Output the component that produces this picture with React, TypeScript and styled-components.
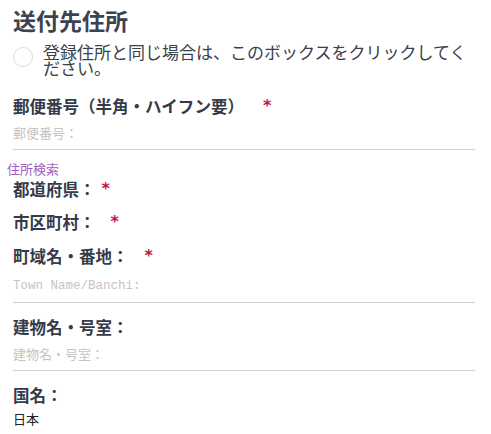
import React from 'react';
import styled, { createGlobalStyle } from 'styled-components';

const GlobalStyle = createGlobalStyle`
  body {
    margin: 0;
    background: #fff;
    font-family: 'Noto Sans CJK JP', 'Noto Sans', sans-serif;
    color: #3a3f4c;
  }
`;

const Form = styled.div`
  padding: 3px 16px 0 13px;
`;

const Title = styled.h2`
  margin: 0;
  font-size: 23px;
  line-height: 34px;
  font-weight: 700;
  color: #3d4250;
`;

const CheckRow = styled.label`
  display: flex;
  align-items: flex-start;
  gap: 10px;
  margin-top: 7px;
`;

const Circle = styled.span`
  flex: none;
  width: 18px;
  height: 18px;
  margin-top: 3px;
  border: 1px solid #dcdcdc;
  border-radius: 50%;
  background: #fff;
`;

const CheckText = styled.span`
  font-size: 17px;
  line-height: 16px;
  color: #3a3f4c;
`;

const Field = styled.div<{ $gap?: number }>`
  margin-top: ${p => p.$gap ?? 0}px;
`;

const Label = styled.div`
  display: flex;
  align-items: center;
  font-size: 16.5px;
  line-height: 20px;
  font-weight: 700;
  color: #353b48;
`;

const Required = styled.span<{ $space: number }>`
  margin-left: ${p => p.$space}px;
  color: #c8103c;
  font-size: 16px;
  font-weight: 700;
  font-family: 'DejaVu Sans', sans-serif;
`;

const Input = styled.div<{ $mono?: boolean }>`
  margin-top: ${p => (p.$mono ? 12 : 9)}px;
  padding-bottom: 8px;
  border-bottom: 1px solid #d2d2d2;
  font-size: ${p => (p.$mono ? '12.5px' : '13px')};
  line-height: 16px;
  color: #c4c4c4;
  font-family: ${p =>
    p.$mono
      ? "'Liberation Mono', 'Noto Sans CJK JP', monospace"
      : "'Noto Sans CJK JP', sans-serif"};
`;

const SearchLink = styled.a`
  display: block;
  margin: 11px 0 0 -6px;
  font-size: 13px;
  line-height: 16px;
  color: #a35fc0;
  text-decoration: none;
`;

const Value = styled.div`
  margin-top: 6px;
  font-size: 13px;
  line-height: 16px;
  color: #222;
`;

const App: React.FC = () => {
  return (
    <>
      <GlobalStyle />
      <Form>
        <Title>送付先住所</Title>
        <CheckRow>
          <Circle />
          <CheckText>登録住所と同じ場合は、このボックスをクリックしてください。</CheckText>
        </CheckRow>

        <Field $gap={20}>
          <Label>
            郵便番号（半角・ハイフン要）<Required $space={19}>*</Required>
          </Label>
          <Input>郵便番号：</Input>
        </Field>

        <SearchLink>住所検索</SearchLink>
        <Field $gap={2}>
          <Label>
            都道府県：<Required $space={6}>*</Required>
          </Label>
        </Field>
        <Field $gap={13}>
          <Label>
            市区町村：<Required $space={15}>*</Required>
          </Label>
        </Field>
        <Field $gap={14}>
          <Label>
            町域名・番地：<Required $space={16}>*</Required>
          </Label>
          <Input $mono>Town Name/Banchi:</Input>
        </Field>

        <Field $gap={14}>
          <Label>建物名・号室：</Label>
          <Input>建物名・号室：</Input>
        </Field>

        <Field $gap={14}>
          <Label>国名：</Label>
          <Value>日本</Value>
        </Field>
      </Form>
    </>
  );
};

export default App;
